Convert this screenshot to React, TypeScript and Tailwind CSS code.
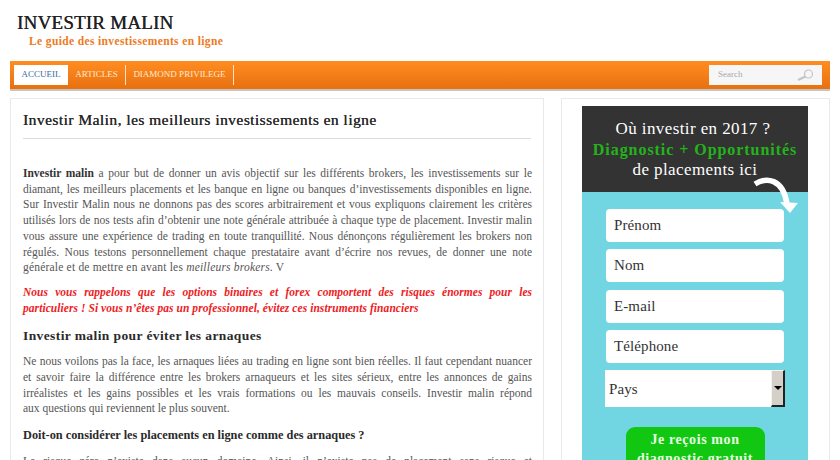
const serif = "font-['Liberation_Serif',serif]"

const Line = ({ children, last }: { children: React.ReactNode; last?: boolean }) => (
  <div className={last ? 'whitespace-nowrap' : 'whitespace-nowrap [text-align:justify] [text-align-last:justify]'}>{children}</div>
)

const Field = ({ label }: { label: string }) => (
  <div className="h-[33px] w-[178px] bg-white rounded-[4px] pl-2 text-[15px] leading-[33px] text-[#333] tracking-[0.1px]">{label}</div>
)

const intro = [
  'a pour but de donner un avis objectif sur les différents brokers, les investissements sur le',
  'diamant, les meilleurs placements et les banque en ligne ou banques d’investissements disponibles en ligne.',
  'Sur Investir Malin nous ne donnons pas des scores arbitrairement et vous expliquons clairement les critères',
  'utilisés lors de nos tests afin d’obtenir une note générale attribuée à chaque type de placement. Investir malin',
  'vous assure une expérience de trading en toute tranquillité. Nous dénonçons régulièrement les brokers non',
  'régulés. Nous testons personnellement chaque prestataire avant d’écrire nos revues, de donner une note',
]

const arnaques = [
  'Ne nous voilons pas la face, les arnaques liées au trading en ligne sont bien réelles. Il faut cependant nuancer',
  'et savoir faire la différence entre les brokers arnaqueurs et les sites sérieux, entre les annonces de gains',
  'irréalistes et les gains possibles et les vrais formations ou les mauvais conseils. Investir malin répond',
]

export default function App() {
  return (
    <div className={`${serif} w-[840px] h-[460px] overflow-hidden bg-white px-[10px]`}>
      <header className="h-[61px] pl-[7px] pt-[12px]">
        <h1 className="text-[19px] leading-[22px] text-[#222] font-normal tracking-[0.2px] [text-shadow:0.3px_0_0_#222]">INVESTIR MALIN</h1>
        <p className="pl-[12px] text-[11.5px] leading-[14px] font-bold text-[#ee7a1c] tracking-[0.37px]">Le guide des investissements en ligne</p>
      </header>

      <nav className="h-[28px] w-[820px] flex items-center justify-between bg-gradient-to-b from-[#ff8d20] to-[#e8700f] shadow-[0_2px_0_#c9c4bd] pl-[4px] pr-[8px]">
        <ul className="flex items-center text-[9px]">
          <li className="h-[20px] w-[54px] bg-white text-[#3b6a9c] flex items-center justify-center">ACCUEIL</li>
          <li className="h-[20px] w-[58px] text-[#ffe9d4] flex items-center justify-center border-r border-[#ffe0c4]">ARTICLES</li>
          <li className="h-[20px] w-[108px] text-[#ffe9d4] flex items-center justify-center border-r border-[#ffe0c4]">DIAMOND PRIVILEGE</li>
        </ul>
        <div className="h-[20px] w-[113px] bg-[#f6f6f6] flex items-center justify-between pl-[9px] pr-[8px] text-[9px] text-[#a8a8a8]">
          <span>Search</span>
          <svg width="18" height="12" viewBox="0 0 18 12" fill="none" stroke="#c4c4c4">
            <circle cx="12.5" cy="5" r="4" strokeWidth="1.2" />
            <path d="M9.5 7.5 L2 11" strokeWidth="2" />
          </svg>
        </div>
      </nav>

      <div className="flex mt-[9px] items-start">
        <main className="w-[534px] h-[400px] shrink-0 border border-[#e9e9e9] px-[12px] pt-[12px] text-[11.5px] leading-[15.7px] text-[#555]">
          <h2 className="w-[508px] h-[28px] border-b border-[#ddd] text-[15.5px] leading-[18px] text-[#2a2a2a] tracking-[0.45px] [text-shadow:0.25px_0_0_#2a2a2a] font-normal">Investir Malin, les meilleurs investissements en ligne</h2>
          <div className="w-[509px] mt-[27px]">
            <Line><strong className="text-[#333]">Investir malin</strong> {intro[0]}</Line>
            {intro.slice(1).map(l => <Line key={l}>{l}</Line>)}
            <Line last><span className="tracking-[0.2px]">générale et de mettre en avant les <em>meilleurs brokers.</em> V</span></Line>
          </div>
          <div className="w-[509px] mt-[9px] font-bold italic text-[#ee1c25]">
            <Line>Nous vous rappelons que les options binaires et forex comportent des risques énormes pour les</Line>
            <Line last><span className="tracking-[0.06px]">particuliers ! Si vous n’êtes pas un professionnel, évitez ces instruments financiers</span></Line>
          </div>
          <h3 className="mt-[11px] text-[13.5px] leading-[18px] font-bold text-[#2a2a2a] tracking-[0.4px]">Investir malin pour éviter les arnaques</h3>
          <div className="w-[509px] mt-[9px]">
            {arnaques.map(l => <Line key={l}>{l}</Line>)}
            <Line last>aux questions qui reviennent le plus souvent.</Line>
          </div>
          <h4 className="mt-[10px] text-[12.3px] leading-[16px] font-bold text-[#2a2a2a]">Doit-on considérer les placements en ligne comme des arnaques ?</h4>
          <div className="w-[509px] mt-[11px]">
            <Line>Le risque zéro n’existe dans aucun domaine. Ainsi, il n’existe pas de placement sans risque et</Line>
          </div>
        </main>

        <aside className="ml-[17px] w-[269px] h-[400px] shrink-0 border border-[#e9e9e9] pt-[7px] pl-[20px]">
          <div className="relative w-[226px] h-[400px] bg-[#72d6e2]">
            <div className="h-[86px] bg-[#333] pt-[13px] text-center text-[17px] leading-[20.5px] text-white tracking-[0.4px]">
              <div className="pr-[4px]">Où investir en 2017 ?</div>
              <div className="font-bold text-[16px] text-[#22b51a] tracking-[0.95px]">Diagnostic + Opportunités</div>
              <div>de placements ici</div>
            </div>
            <svg className="absolute left-[170px] top-[70px]" width="48" height="40" viewBox="0 0 48 40" fill="none">
              <path d="M3 8 C14 1 31 2 35 28" stroke="#fff" strokeWidth="5.5" />
              <path d="M28 26 L46 27 L38 37 Z" fill="#fff" />
            </svg>
            <div className="flex flex-col items-center pt-[17px] gap-[7.3px]">
              <Field label="Prénom" />
              <Field label="Nom" />
              <Field label="E-mail" />
              <Field label="Téléphone" />
              <div className="h-[37px] w-[180px] bg-white flex items-stretch justify-between text-[15px] text-[#333] tracking-[0.1px]">
                <span className="pl-[4px] self-center pt-[2px]">Pays</span>
                <div className="w-[14px] bg-[#d4d0c8] border-t border-l border-[#f4f2ee] border-r-2 border-b-2 border-r-[#222] border-b-[#222] flex items-center justify-center">
                  <div className="w-0 h-0 border-x-[4px] border-x-transparent border-t-[4px] border-t-black" />
                </div>
              </div>
              <div className="mt-[13px] w-[139px] h-[70px] bg-[#12c712] rounded-[9px] pt-[3px] text-center text-[14px] leading-[19px] font-bold text-[#e6ffe0] tracking-[0.6px]">
                Je reçois mon<br />diagnostic gratuit
              </div>
            </div>
          </div>
        </aside>
      </div>
    </div>
  )
}
